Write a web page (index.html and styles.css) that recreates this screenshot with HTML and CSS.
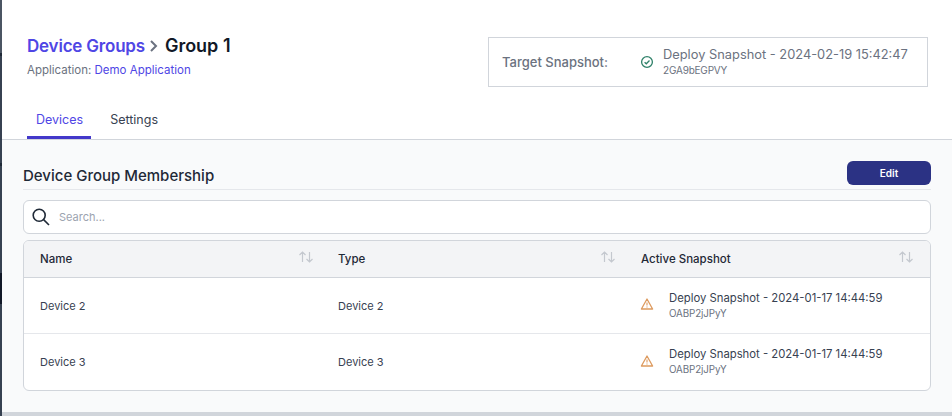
FILE: index.html
```html
<!DOCTYPE html>
<html lang="en">
<head>
<meta charset="utf-8">
<title>Group 1</title>
<link rel="stylesheet" href="styles.css">
</head>
<body>
<div class="edge"></div>
<div class="page">
  <header class="header">
    <div class="top">
      <div class="titles">
        <h1 class="crumbs">
          <a class="crumb-link">Device Groups</a>
          <svg class="chev" viewBox="0 0 10 14" width="10" height="14"><path d="M2 2l5 5-5 5" fill="none" stroke="#6b7280" stroke-width="2"/></svg>
          <span>Group 1</span>
        </h1>
        <p class="app">Application: <a class="app-link">Demo Application</a></p>
      </div>
      <div class="target">
        <span class="target-label">Target Snapshot:</span>
        <svg class="check" viewBox="0 0 14 14" width="14" height="14"><circle cx="7" cy="7" r="5.4" fill="none" stroke="#2f8169" stroke-width="1.3"/><path d="M4.6 7.2l1.7 1.6 3.2-3.3" fill="none" stroke="#2f8169" stroke-width="1.3"/></svg>
        <div class="target-info">
          <div class="target-name">Deploy Snapshot - 2024-02-19 15:42:47</div>
          <div class="target-id">2GA9bEGPVY</div>
        </div>
      </div>
    </div>
    <nav class="tabs">
      <a class="tab active">Devices</a>
      <a class="tab">Settings</a>
    </nav>
  </header>
  <main class="main">
    <div class="section-head">
      <h2 class="section-title">Device Group Membership</h2>
      <button class="edit">Edit</button>
    </div>
    <label class="search">
      <svg viewBox="0 0 20 20" width="20" height="20"><circle cx="8.2" cy="8.2" r="6" fill="none" stroke="#1f2937" stroke-width="1.6"/><path d="M12.6 12.6l5.4 5.4" fill="none" stroke="#1f2937" stroke-width="1.6"/></svg>
      <span class="placeholder">Search...</span>
    </label>
    <div class="table">
      <div class="row head">
        <div class="cell">Name<svg class="sort" viewBox="0 0 16 14" width="16" height="14"><path d="M4.5 12V2M1.5 5l3-3 3 3M11.5 2v10M8.5 9l3 3 3-3" fill="none" stroke="#c4c8cf" stroke-width="1.2"/></svg></div>
        <div class="cell">Type<svg class="sort" viewBox="0 0 16 14" width="16" height="14"><path d="M4.5 12V2M1.5 5l3-3 3 3M11.5 2v10M8.5 9l3 3 3-3" fill="none" stroke="#c4c8cf" stroke-width="1.2"/></svg></div>
        <div class="cell">Active Snapshot<svg class="sort" viewBox="0 0 16 14" width="16" height="14"><path d="M4.5 12V2M1.5 5l3-3 3 3M11.5 2v10M8.5 9l3 3 3-3" fill="none" stroke="#c4c8cf" stroke-width="1.2"/></svg></div>
      </div>
      <div class="row">
        <div class="cell">Device 2</div>
        <div class="cell">Device 2</div>
        <div class="cell">
          <svg class="warn" viewBox="0 0 14 14" width="14" height="14"><path d="M7 2L12.6 12H1.4z" fill="none" stroke="#dd9a5e" stroke-width="1.3" stroke-linejoin="round"/><path d="M7 5.5v3M7 9.6v1" fill="none" stroke="#dd9a5e" stroke-width="1.1"/></svg>
          <div><div class="snap-name">Deploy Snapshot - 2024-01-17 14:44:59</div><div class="snap-id">OABP2jJPyY</div></div>
        </div>
      </div>
      <div class="row">
        <div class="cell">Device 3</div>
        <div class="cell">Device 3</div>
        <div class="cell">
          <svg class="warn" viewBox="0 0 14 14" width="14" height="14"><path d="M7 2L12.6 12H1.4z" fill="none" stroke="#dd9a5e" stroke-width="1.3" stroke-linejoin="round"/><path d="M7 5.5v3M7 9.6v1" fill="none" stroke="#dd9a5e" stroke-width="1.1"/></svg>
          <div><div class="snap-name">Deploy Snapshot - 2024-01-17 14:44:59</div><div class="snap-id">OABP2jJPyY</div></div>
        </div>
      </div>
    </div>
  </main>
  <div class="foot"></div>
</div>
</body>
</html>
```
FILE: styles.css
```css
* { box-sizing: border-box; }
html, body { margin: 0; height: 100%; overflow: hidden; }
body { display: flex; font-family: Inter, "Noto Sans", sans-serif; color: #1f2937; background: #fff; }
.edge { width: 2px; flex: none; background: linear-gradient(to bottom, #4b5563 0 53px, #1f2937 53px 56px, #374151 56px 163px, #1f2937 163px 166px, #374151 166px 273px, #111827 273px 304px, #374151 304px); }
.page { flex: 1; min-width: 0; display: flex; flex-direction: column; height: 416px; }
.header { height: 140px; padding: 35px 24px 0 25px; border-bottom: 1px solid #d1d5db; background: #fff; display: flex; flex-direction: column; }
.top { display: flex; justify-content: space-between; height: 67px; }
.crumbs { margin: 0; font-size: 18px; line-height: 22px; font-weight: 600; color: #111827; display: flex; align-items: center; }
.crumb-link { color: #4f46e5; font-size: 17px; letter-spacing: -0.2px; }
.chev { margin: 0 6px 0 4px; }
.app { margin: 5px 0 0; font-size: 11.5px; line-height: 16px; color: #6b7280; }
.app-link { color: #4f46e5; }
.target { width: 440px; height: 50px; margin-top: 2px; border: 1px solid #d1d5db; display: flex; align-items: center; padding: 0 13px; }
.target-label { width: 138px; font-size: 13px; font-weight: 500; color: #6b7280; white-space: nowrap; }
.check { margin-right: 9px; }
.target-name { font-size: 12.85px; line-height: 16px; color: #6b7280; white-space: nowrap; }
.target-id { font-size: 10px; line-height: 14px; letter-spacing: -0.2px; color: #6b7280; }
.tabs { display: flex; height: 37px; }
.tab { height: 37px; padding: 10px 8px 0 9px; font-size: 12.5px; line-height: 16px; color: #374151; margin-right: 10px; }
.active { color: #4f46e5; border-bottom: 3px solid #4338ca; }
.main { flex: 1; min-height: 0; background: #f9fafb; padding: 21px 21px 0; }
.section-head { display: flex; justify-content: space-between; height: 29px; border-bottom: 1px solid #e5e7eb; }
.section-title { margin: 5px 0 0; font-size: 15px; font-weight: 500; line-height: 20px; color: #1f2937; }
.edit { width: 84px; height: 24px; border: 0; border-radius: 6px; background: #2b3284; color: #fff; font: 600 10px Inter, sans-serif; }
.search { display: flex; align-items: center; height: 34px; margin-top: 10px; padding: 0 7px; background: #fff; border: 1px solid #d1d5db; border-radius: 6px; }
.placeholder { margin-left: 8px; font-size: 11px; color: #9ca3af; }
.table { margin-top: 6px; background: #fff; border: 1px solid #d1d5db; border-radius: 6px; overflow: hidden; }
.row { display: grid; grid-template-columns: 298px 303px 1fr; height: 57px; border-top: 1px solid #e5e7eb; }
.row.head { height: 37px; border-top: 0; background: #f3f4f6; border-bottom: 1px solid #d1d5db; font-weight: 500; }
.row.head + .row { border-top: 0; height: 55px; }
.cell { display: flex; align-items: center; padding: 0 8px 0 16px; font-size: 11px; color: #374151; }
.cell:nth-child(2) { padding-right: 9px; }
.cell:last-child { padding-right: 16px; }
.head .cell { color: #1f2937; font-size: 11.5px; }
.sort { margin: -4px 0 0 auto; }
.warn { margin: -3px 15px 0 -1px; }
.snap-name { font-size: 11.3px; line-height: 16px; color: #374151; }
.snap-id { font-size: 9.8px; line-height: 16px; letter-spacing: -0.1px; color: #6b7280; }
.foot { height: 4px; background: #d1d5db; flex: none; }
```
